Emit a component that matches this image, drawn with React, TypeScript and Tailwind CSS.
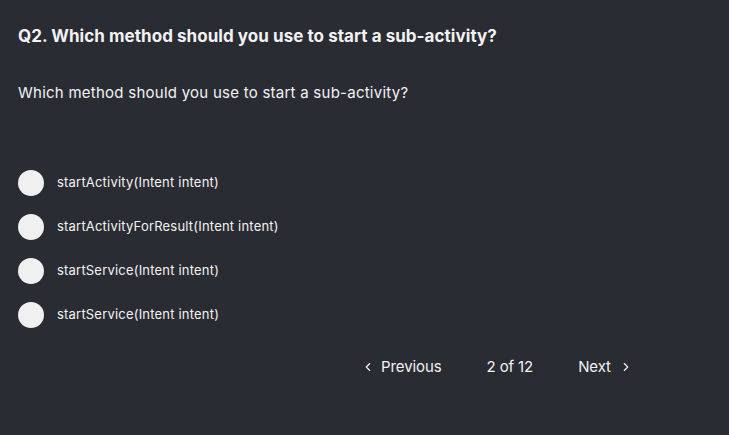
import { ChevronLeft, ChevronRight } from 'lucide-react';

const options = [
  'startActivity(Intent intent)',
  'startActivityForResult(Intent intent)',
  'startService(Intent intent)',
  'startService(Intent intent)',
];

export default function App() {
  return (
    <div
      className="h-[435px] w-full bg-[#2a2c33] px-[18px] text-[#f2f2f2]"
      style={{ fontFamily: 'Inter, "Open Sans", sans-serif' }}
    >
      <h1 className="pt-[25px] text-[17px] font-bold leading-[22px] tracking-[0.05px]">
        Q2. Which method should you use to start a sub-activity?
      </h1>
      <p className="mt-[36px] text-[15px] leading-[20px] tracking-[0.25px]">
        Which method should you use to start a sub-activity?
      </p>

      <ul className="mt-[67px] flex flex-col gap-[18px]">
        {options.map((opt, i) => (
          <li key={i} className="flex h-[26px] items-center gap-[13px]">
            <span className="h-[26px] w-[26px] shrink-0 rounded-full bg-[#f0f0f0]" />
            <span className="text-[13px] tracking-[0.2px]">{opt}</span>
          </li>
        ))}
      </ul>

      <div className="mt-[27px] flex h-[24px] items-center pl-[343px] text-[15px] tracking-[-0.1px]">
        <button className="flex items-center gap-[6px]">
          <ChevronLeft size={14} strokeWidth={2} />
          <span>Previous</span>
        </button>
        <span className="ml-[45px]">2 of 12</span>
        <button className="ml-[45px] flex items-center gap-[8px]">
          <span>Next</span>
          <ChevronRight size={14} strokeWidth={2} />
        </button>
      </div>
    </div>
  );
}
